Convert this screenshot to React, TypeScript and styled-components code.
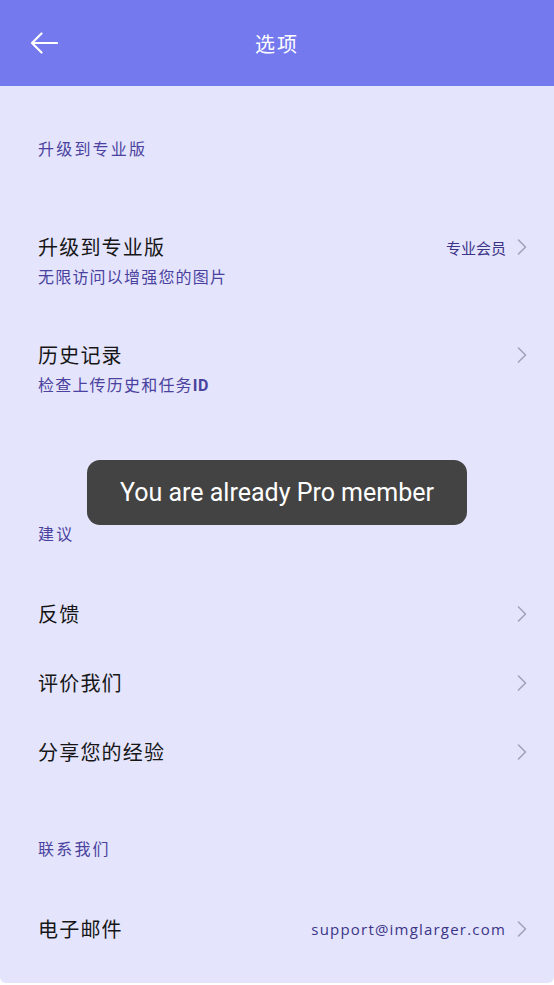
import React from 'react';
import styled, { createGlobalStyle } from 'styled-components';

const GlobalStyle = createGlobalStyle`
  html, body {
    margin: 0;
    padding: 0;
    background: #ffffff;
  }
  * {
    box-sizing: border-box;
  }
`;

const Page = styled.div`
  position: relative;
  width: 554px;
  min-height: 983px;
  background: #e4e4fc;
  border-radius: 0 0 6px 6px;
  font-family: 'Noto Sans CJK SC', 'Noto Sans', sans-serif;
  overflow: hidden;
`;

const Header = styled.header`
  height: 86px;
  background: #7479ee;
  display: grid;
  grid-template-columns: 86px 1fr 86px;
  align-items: center;
`;

const BackButton = styled.button`
  border: 0;
  background: none;
  padding: 0 0 0 30px;
  height: 40px;
  display: flex;
  align-items: center;
  cursor: pointer;
`;

const HeaderTitle = styled.h1`
  margin: 0;
  text-align: center;
  color: #ffffff;
  font-size: 20px;
  font-weight: 400;
  letter-spacing: 2px;
`;

const SectionTitle = styled.div<{ $top: number; $bottom: number }>`
  margin: ${(p) => p.$top}px 0 ${(p) => p.$bottom}px;
  padding-left: 38px;
  height: 24px;
  line-height: 24px;
  font-size: 16px;
  letter-spacing: 2.2px;
  color: #4a429e;
`;

const Row = styled.div<{ $tall?: boolean }>`
  display: flex;
  align-items: ${(p) => (p.$tall ? 'flex-start' : 'center')};
  justify-content: space-between;
  height: ${(p) => (p.$tall ? 108 : 69)}px;
  padding: ${(p) => (p.$tall ? '22px 27px 0 38px' : '0 27px 0 38px')};
  cursor: pointer;
`;

const RowText = styled.div`
  display: flex;
  flex-direction: column;
  gap: 3px;
`;

const RowTitle = styled.div`
  font-size: 20px;
  line-height: 28px;
  letter-spacing: 1.2px;
  color: #161616;
`;

const RowSub = styled.div`
  font-size: 16px;
  line-height: 24px;
  letter-spacing: 1.2px;
  color: #4a429e;

  b {
    font-family: 'Roboto', 'Noto Sans', sans-serif;
    font-weight: 700;
    letter-spacing: 0.5px;
  }
`;

const RowEnd = styled.div`
  display: flex;
  align-items: center;
  gap: 11px;
  height: 28px;
`;

const EndText = styled.span<{ $latin?: boolean }>`
  font-family: ${(p) =>
    p.$latin ? "'Open Sans', 'Noto Sans', sans-serif" : "'Noto Sans CJK SC', sans-serif"};
  font-size: 15px;
  letter-spacing: ${(p) => (p.$latin ? '1.2px' : '0')};
  font-weight: ${(p) => (p.$latin ? 500 : 400)};
  color: #3b3588;
`;

const Toast = styled.div`
  position: absolute;
  top: 460px;
  left: 50%;
  transform: translateX(-50%);
  width: 380px;
  height: 65px;
  border-radius: 13px;
  background: #434343;
  display: flex;
  align-items: center;
  justify-content: center;
  color: #ffffff;
  font-family: 'Roboto', 'Noto Sans', sans-serif;
  font-size: 25px;
`;

const Chevron = () => (
  <svg width="10" height="16" viewBox="0 0 10 16" fill="none">
    <polyline points="1.5,1 8.5,8 1.5,15" stroke="#a2a2ba" strokeWidth="1.6" strokeLinejoin="round" strokeLinecap="round" />
  </svg>
);

const BackArrow = () => (
  <svg width="28" height="22" viewBox="0 0 28 22" fill="none">
    <path d="M2 11 H27 M11.5 1.5 L2 11 L11.5 20.5" stroke="#ffffff" strokeWidth="2.2" strokeLinecap="round" strokeLinejoin="round" />
  </svg>
);

type Item = { title: string; sub?: React.ReactNode; end?: string; latin?: boolean };

const upgrade: Item[] = [
  { title: '升级到专业版', sub: '无限访问以增强您的图片', end: '专业会员' },
  { title: '历史记录', sub: <>检查上传历史和任务<b>ID</b></> },
];

const advice: Item[] = [{ title: '反馈' }, { title: '评价我们' }, { title: '分享您的经验' }];

const contact: Item[] = [{ title: '电子邮件', end: 'support@imglarger.com', latin: true }];

const ListRow = ({ item }: { item: Item }) => (
  <Row $tall={!!item.sub}>
    <RowText>
      <RowTitle>{item.title}</RowTitle>
      {item.sub && <RowSub>{item.sub}</RowSub>}
    </RowText>
    <RowEnd>
      {item.end && <EndText $latin={item.latin}>{item.end}</EndText>}
      <Chevron />
    </RowEnd>
  </Row>
);

export default function App() {
  return (
    <Page>
      <GlobalStyle />
      <Header>
        <BackButton aria-label="back">
          <BackArrow />
        </BackButton>
        <HeaderTitle>选项</HeaderTitle>
        <span />
      </Header>

      <SectionTitle $top={50} $bottom={51}>升级到专业版</SectionTitle>
      {upgrade.map((it) => (
        <ListRow key={it.title} item={it} />
      ))}

      <SectionTitle $top={94} $bottom={34}>建议</SectionTitle>
      {advice.map((it) => (
        <ListRow key={it.title} item={it} />
      ))}

      <SectionTitle $top={50} $bottom={34}>联系我们</SectionTitle>
      {contact.map((it) => (
        <ListRow key={it.title} item={it} />
      ))}

      <Toast>You are already Pro member</Toast>
    </Page>
  );
}
